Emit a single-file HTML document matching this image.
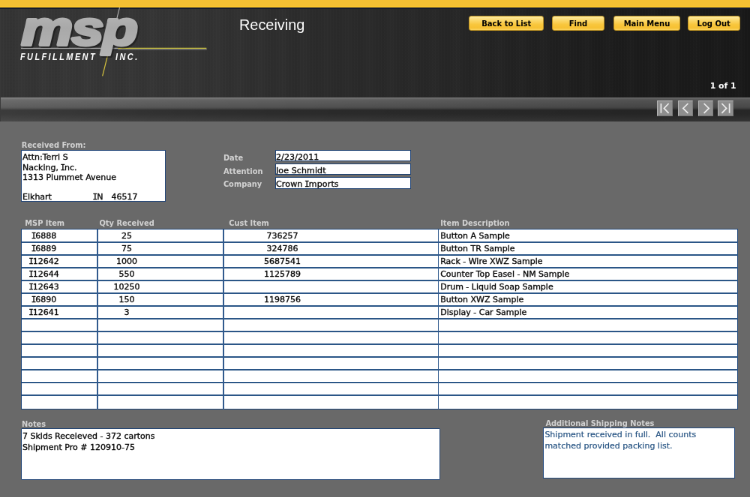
<!DOCTYPE html>
<html>
<head>
<meta charset="utf-8">
<title>Receiving</title>
<style>
html,body{margin:0;padding:0;}
body{width:750px;height:497px;overflow:hidden;background:#696969;position:relative;}
#s{position:absolute;left:0;top:0;width:1000px;height:663px;transform:scale(0.75);transform-origin:0 0;will-change:transform;background:#696969;overflow:hidden;
  font-family:"DejaVu Sans","Liberation Sans",sans-serif;}
#s *{box-sizing:border-box;}
.abs{position:absolute;}
/* header */
#ybar{left:0;top:0;width:1000px;height:10.6px;background:linear-gradient(#f4c033 0,#f4c033 7.6px,#fcc62c 8.2px,#fcc62c 9.6px,#e0ac2c 10.6px);}
#hdr{left:0;top:10.6px;width:1000px;height:120px;background:linear-gradient(90deg,#343434 0,#363636 12%,#343434 24%,#2b2b2b 42%,#262626 60%,#1c1c1c 80%,#181818 100%);}
#hdr .tex{left:0;top:0;width:100%;height:100%;background:repeating-linear-gradient(90deg,rgba(255,255,255,0.012) 0,rgba(255,255,255,0.012) 1.33px,rgba(0,0,0,0.012) 1.33px,rgba(0,0,0,0.012) 4px),repeating-linear-gradient(90deg,rgba(255,255,255,0.012) 0,rgba(255,255,255,0.0) 9px,rgba(0,0,0,0.02) 17px,rgba(255,255,255,0.012) 29px);}
#hline{left:0;top:10.2px;width:1000px;height:1.4px;background:#161c2c;}
#bar{left:0;top:130.2px;width:1000px;height:32.2px;background:#2a2a2a;}
#bar .in{left:1.3px;top:0;width:1000px;height:32.2px;
  background:linear-gradient(#8a8a8a 0,#6e6e6e 1.4px,#606060 3.2px,#515151 12.5px,#484848 14.2px,#2a2a2a 16.9px,#2b2b2b 21.8px,#3a3a3a 32.2px);}
#bar .sh{left:0;top:0;width:1000px;height:32.2px;background:linear-gradient(90deg,rgba(255,255,255,0.08) 0,rgba(255,255,255,0.03) 20%,rgba(0,0,0,0.0) 40%,rgba(0,0,0,0.08) 65%,rgba(0,0,0,0.14) 85%,rgba(0,0,0,0.1) 100%);}
.title{left:319px;top:21.2px;font-family:"Liberation Sans",sans-serif;font-size:19.9px;color:#fbfbfb;line-height:24px;white-space:nowrap;}
.btn{top:21.3px;height:19.6px;border-radius:3px;border:1px solid #b98f22;background:linear-gradient(#fdeaa0 0,#fbd769 30%,#f8c63c 60%,#f6c133 85%,#fbd560 100%);
  font-weight:bold;font-size:10px;color:#000;text-align:center;line-height:17.6px;padding-top:1.2px;white-space:nowrap;}
.cnt{left:880px;width:101.6px;top:108px;text-align:right;color:#fff;font-weight:bold;font-size:10.9px;line-height:14px;white-space:nowrap;}
.nav{top:134.2px;width:20.8px;height:20.6px;background:#8e8e8e;border:1.2px solid;border-color:#bcbcbc #7a7a7a #727272 #b4b4b4;}
.nav svg{position:absolute;left:-1px;top:-1px;width:21px;height:21px;}
/* form */
.lbl{font-weight:bold;font-size:9.85px;color:#d2d2d2;line-height:12px;white-space:nowrap;}
.box{background:#fff;border:1.15px solid #24477a;}
.t{font-size:11px;color:#000;white-space:nowrap;line-height:13.25px;-webkit-text-stroke:0.35px #111;}
.fld{left:366.7px;width:181.2px;height:15.3px;background:#fff;border:1.4px solid #1f4272;overflow:hidden;}
.fld>span{position:absolute;left:0.3px;top:1.9px;font-size:11px;line-height:13px;color:#000;white-space:nowrap;-webkit-text-stroke:0.35px #111;}
.hl{left:28.5px;width:955px;height:1.5px;background:#2b5687;}
.vl{top:305.5px;width:1.25px;height:240px;background:#315a8e;}
.r{height:17px;font-size:11px;line-height:13px;color:#000;white-space:nowrap;-webkit-text-stroke:0.35px #111;}
.si{font-family:"DejaVu Sans Mono","Liberation Mono",monospace;margin:0 -1px;}
.c1{left:-41px;width:200px;text-align:center;}
.c2{left:69px;width:200px;text-align:center;}
.c3{left:276.5px;width:200px;text-align:center;}
.c4{left:587.2px;}
</style>
</head>
<body>
<div id="s">
  <div id="ybar" class="abs"></div>
  <div id="hdr" class="abs"><div class="tex abs"></div></div>
  <div id="hline" class="abs"></div>
  <div id="bar" class="abs"><div class="in abs"></div><div class="sh abs"></div></div>

  <!-- LOGO -->
  <svg class="abs" style="left:0;top:0" width="400" height="133.33" viewBox="0 0 300 100">
    <defs>
      <linearGradient id="mg" x1="0" y1="0" x2="0" y2="1">
        <stop offset="0" stop-color="#bdbdbd"/><stop offset="0.5" stop-color="#a9a9a9"/><stop offset="1" stop-color="#b3b3b3"/>
      </linearGradient>
    </defs>
    <line x1="119.6" y1="7.6" x2="109.5" y2="48" stroke="#b8b8b8" stroke-width="0.8"/>
    <line x1="109.5" y1="48" x2="102.5" y2="76" stroke="#d6c33e" stroke-width="0.9"/>
    <rect x="21" y="47.8" width="97" height="1.4" fill="#a0a0a0"/>
    <rect x="21" y="49.2" width="97" height="0.9" fill="#1c1c1c"/>
    <rect x="118" y="47.8" width="88.5" height="0.9" fill="#d6cb3e"/>
    <rect x="118" y="48.7" width="88.8" height="1.2" fill="#707070"/>
    <g transform="translate(21.4,44.9) scale(1.19,1)">
      <text x="0" y="0" font-family="Liberation Sans, sans-serif" font-weight="bold" font-style="italic" font-size="48.6" letter-spacing="-1.0" fill="#151515" stroke="#151515" stroke-width="3" stroke-linejoin="round" transform="translate(1.2,1.5)" opacity="0.55">msp</text>
      <text x="0" y="0" font-family="Liberation Sans, sans-serif" font-weight="bold" font-style="italic" font-size="48.6" letter-spacing="-1.0" fill="url(#mg)" stroke="url(#mg)" stroke-width="3" stroke-linejoin="round">msp</text>
    </g>
    <text transform="translate(20.2,59.9) scale(0.9,1.09)" x="0" y="0" font-family="Liberation Sans, sans-serif" font-weight="bold" font-style="italic" font-size="9.1" letter-spacing="2.05" fill="#ffffff">FULFILLMENT</text>
    <text transform="translate(115.5,59.9) scale(0.9,1.09)" x="0" y="0" font-family="Liberation Sans, sans-serif" font-weight="bold" font-style="italic" font-size="9.1" letter-spacing="2.05" fill="#ffffff">INC.</text>
  </svg>

  <div class="abs title">Receiving</div>

  <div class="abs btn" style="left:625.3px;width:100px;">Back to List</div>
  <div class="abs btn" style="left:736px;width:70px;">Find</div>
  <div class="abs btn" style="left:818px;width:89px;">Main Menu</div>
  <div class="abs btn" style="left:916.7px;width:70px;">Log Out</div>

  <div class="abs cnt">1 of 1</div>

  <div class="abs nav" style="left:876.4px"><svg viewBox="0 0 21 21"><path d="M5.4 4v12.8M15.6 4l-6.2 6.4 6.2 6.4" fill="none" stroke="#ececec" stroke-width="1.7"/></svg></div>
  <div class="abs nav" style="left:903.6px"><svg viewBox="0 0 21 21"><path d="M13.4 4l-6.6 6.4 6.6 6.4" fill="none" stroke="#ececec" stroke-width="1.7"/></svg></div>
  <div class="abs nav" style="left:930.7px"><svg viewBox="0 0 21 21"><path d="M7.6 4l6.6 6.4-6.6 6.4" fill="none" stroke="#ececec" stroke-width="1.7"/></svg></div>
  <div class="abs nav" style="left:957.4px"><svg viewBox="0 0 21 21"><path d="M15.6 4v12.8M5.4 4l6.2 6.4-6.2 6.4" fill="none" stroke="#ececec" stroke-width="1.7"/></svg></div>

  <!-- FORM -->
  <div class="abs lbl" style="left:28.8px;top:188px;">Received From:</div>
  <div class="abs box" style="left:28.1px;top:200px;width:193.4px;height:69.3px;"></div>
  <div class="abs t" style="left:30px;top:203.3px;">Attn:Terri S<br>Nacking, <span class="si">I</span>nc.<br>1313 Plummet Avenue<br><br>Elkhart</div>
  <div class="abs t" style="left:124.5px;top:256.3px;"><span class="si">I</span>N</div>
  <div class="abs t" style="left:148.5px;top:256.3px;">46517</div>

  <div class="abs lbl" style="left:297.9px;top:204.5px;">Date</div>
  <div class="abs lbl" style="left:297.9px;top:222.5px;">Attention</div>
  <div class="abs lbl" style="left:297.9px;top:240.2px;">Company</div>
  <div class="abs fld" style="top:200.1px;"><span style="letter-spacing:0.12px">2/23/2011</span></div>
  <div class="abs fld" style="top:218.2px;"><span style="letter-spacing:0.12px">Joe Schmidt</span></div>
  <div class="abs fld" style="top:236.3px;"><span style="letter-spacing:0.15px">Crown <span class="si">I</span>mports</span></div>

  <div class="abs lbl" style="left:33.3px;top:291.7px;">MSP Item</div>
  <div class="abs lbl" style="left:132.5px;top:291.7px;">Qty Received</div>
  <div class="abs lbl" style="left:305.3px;top:291.7px;">Cust Item</div>
  <div class="abs lbl" style="left:587.2px;top:291.7px;">Item Description</div>

  <div id="tbl" class="abs" style="left:28px;top:305.2px;width:956.3px;height:240.7px;background:#fff;border:1.7px solid #1d4579;"></div>
  <div id="rows"></div>
  <div class="abs hl" style="top:322.07px"></div>
  <div class="abs hl" style="top:339.09px"></div>
  <div class="abs hl" style="top:356.11px"></div>
  <div class="abs hl" style="top:373.13px"></div>
  <div class="abs hl" style="top:390.15px"></div>
  <div class="abs hl" style="top:407.17px"></div>
  <div class="abs hl" style="top:424.19px"></div>
  <div class="abs hl" style="top:441.21px"></div>
  <div class="abs hl" style="top:458.23px"></div>
  <div class="abs hl" style="top:475.25px"></div>
  <div class="abs hl" style="top:492.27px"></div>
  <div class="abs hl" style="top:509.29px"></div>
  <div class="abs hl" style="top:526.31px"></div>
  <div class="abs vl" style="left:129.25px"></div>
  <div class="abs vl" style="left:297.45px"></div>
  <div class="abs vl" style="left:583.85px"></div>
  <div class="abs r c1" style="top:307.60px"><span class="si">I</span>6888</div><div class="abs r c2" style="top:307.60px">25</div><div class="abs r c3" style="top:307.60px">736257</div><div class="abs r c4" style="top:307.60px">Button A Sample</div>
  <div class="abs r c1" style="top:324.62px"><span class="si">I</span>6889</div><div class="abs r c2" style="top:324.62px">75</div><div class="abs r c3" style="top:324.62px">324786</div><div class="abs r c4" style="top:324.62px">Button TR Sample</div>
  <div class="abs r c1" style="top:341.64px"><span class="si">I</span>12642</div><div class="abs r c2" style="top:341.64px">1000</div><div class="abs r c3" style="top:341.64px">5687541</div><div class="abs r c4" style="top:341.64px">Rack - Wire XWZ Sample</div>
  <div class="abs r c1" style="top:358.66px"><span class="si">I</span>12644</div><div class="abs r c2" style="top:358.66px">550</div><div class="abs r c3" style="top:358.66px">1125789</div><div class="abs r c4" style="top:358.66px">Counter Top Easel - NM Sample</div>
  <div class="abs r c1" style="top:375.68px"><span class="si">I</span>12643</div><div class="abs r c2" style="top:375.68px">10250</div><div class="abs r c4" style="top:375.68px">Drum - Liquid Soap Sample</div>
  <div class="abs r c1" style="top:392.70px"><span class="si">I</span>6890</div><div class="abs r c2" style="top:392.70px">150</div><div class="abs r c3" style="top:392.70px">1198756</div><div class="abs r c4" style="top:392.70px">Button XWZ Sample</div>
  <div class="abs r c1" style="top:409.72px"><span class="si">I</span>12641</div><div class="abs r c2" style="top:409.72px">3</div><div class="abs r c4" style="top:409.72px">Display - Car Sample</div>
  <!--rows-end-->

  <div class="abs lbl" style="left:28.9px;top:560px;">Notes</div>
  <div class="abs box" style="left:28.1px;top:570.7px;width:558.5px;height:69.2px;border-width:1.6px;border-color:#1e4274;border-radius:1px;"></div>
  <div class="abs t" style="left:30px;top:573.6px;line-height:15.2px;">7 Skids Receieved - 372 cartons<br>Shipment Pro # 120910-75</div>

  <div class="abs lbl" style="left:727.4px;top:559.3px;">Additional Shipping Notes</div>
  <div class="abs box" style="left:724.1px;top:569.9px;width:255.9px;height:68.5px;border-width:1.35px;border-color:#234a7e;"></div>
  <div class="abs t" style="left:726.4px;top:573.4px;line-height:14.9px;color:#1d4c7c;-webkit-text-stroke:0.18px #2a5788;">Shipment received in full.&nbsp; All counts<br>matched provided packing list.</div>
</div>
</body>
</html>
